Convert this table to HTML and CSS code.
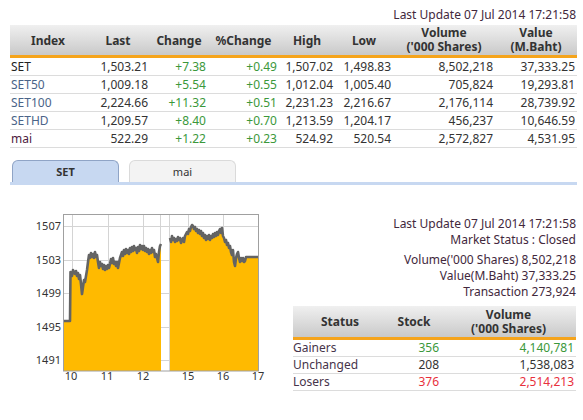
FILE: index.html
```html
<!DOCTYPE html>
<html>
<head>
<meta charset="utf-8">
<link rel="stylesheet" href="styles.css">
</head>
<body>
<div class="page">
  <div class="update top">Last Update 07 Jul 2014 17:21:58</div>
  <table class="idx">
    <colgroup>
      <col class="c-index"><col class="c-last"><col class="c-chg"><col class="c-pchg"><col class="c-high"><col class="c-low"><col class="c-vol"><col class="c-val">
    </colgroup>
    <thead>
      <tr><th>Index</th><th>Last</th><th>Change</th><th>%Change</th><th>High</th><th>Low</th><th><div class="l2">Volume</div><div class="l2">('000 Shares)</div></th><th><div class="l2">Value</div><div class="l2">(M.Baht)</div></th></tr>
    </thead>
    <tbody>
      <tr><td class="name n-set">SET</td><td>1,503.21</td><td class="up">+7.38</td><td class="up">+0.49</td><td>1,507.02</td><td>1,498.83</td><td>8,502,218</td><td>37,333.25</td></tr>
      <tr><td class="name n-blue">SET50</td><td>1,009.18</td><td class="up">+5.54</td><td class="up">+0.55</td><td>1,012.04</td><td>1,005.40</td><td>705,824</td><td>19,293.81</td></tr>
      <tr><td class="name n-blue">SET100</td><td>2,224.66</td><td class="up">+11.32</td><td class="up">+0.51</td><td>2,231.23</td><td>2,216.67</td><td>2,176,114</td><td>28,739.92</td></tr>
      <tr><td class="name n-blue">SETHD</td><td>1,209.57</td><td class="up">+8.40</td><td class="up">+0.70</td><td>1,213.59</td><td>1,204.17</td><td>456,237</td><td>10,646.59</td></tr>
      <tr><td class="name n-mai">mai</td><td>522.29</td><td class="up">+1.22</td><td class="up">+0.23</td><td>524.92</td><td>520.54</td><td>2,572,827</td><td>4,531.95</td></tr>
    </tbody>
  </table>

  <div class="tabs">
    <div class="tab active">SET</div>
    <div class="tab">mai</div>
  </div>
  <div class="tabbar"></div>

  <div class="lower">
    <svg class="chart" width="293" height="205" viewBox="0 185 293 205" xmlns="http://www.w3.org/2000/svg">
      <rect x="63.5" y="214.5" width="195" height="156.5" fill="#fff"/>
      <g stroke="#d4d4d4" stroke-width="1">
        <line x1="63" y1="226.5" x2="259" y2="226.5"/>
        <line x1="63" y1="260.5" x2="259" y2="260.5"/>
        <line x1="63" y1="293.5" x2="259" y2="293.5"/>
        <line x1="63" y1="327.5" x2="259" y2="327.5"/>
        <line x1="63" y1="360.5" x2="259" y2="360.5"/>
        <line x1="72.5" y1="214" x2="72.5" y2="371"/>
        <line x1="108.5" y1="214" x2="108.5" y2="371"/>
        <line x1="143.5" y1="214" x2="143.5" y2="371"/>
        <line x1="160.5" y1="214" x2="160.5" y2="371"/>
        <line x1="169.5" y1="214" x2="169.5" y2="371"/>
        <line x1="188.5" y1="214" x2="188.5" y2="371"/>
        <line x1="223.5" y1="214" x2="223.5" y2="371"/>
      </g>
      <polygon fill="#ffba00" points="63,371 63,321 70,321 70.5,272 72,276 73,270 75,274 76,271 77,276 78,273 79,279 80,275 81,284 82,294 83,287 84,280 85,282 86,276 87,270 88,262 89,255 90,258 91,253 92,257 93,254 94,258 95,252 96,257 97,255 98,262 99,268 100,262 101,266 102,264 103,269 104,265 105,270 106,266 107,269 108,265 109,268 110,264 111,259 112,263 113,258 114,264 115,262 116,266 117,262 118,268 119,263 120,258 121,255 122,252 123,256 124,250 125,254 126,249 127,253 128,250 129,254 130,248 131,252 132,247 133,251 134,246 135,250 136,248 137,253 138,247 139,251 140,245 141,249 142,246 143,250 144,246 145,251 146,248 147,252 148,249 149,254 150,250 151,253 152,248 153,252 154,250 155,257 156,254 157,258 158,262 159,252 160,246 161,244 161,371"/>
      <polygon fill="#ffba00" points="170,371 170,238 171,242 172,236 173,240 174,238 175,242 176,239 177,241 178,237 179,240 180,238 181,243 182,240 183,238 184,242 185,236 186,234 187,232 188,234 189,229 190,231 191,227 192,225 193,226 194,229 195,227 196,231 197,229 198,233 199,230 200,234 201,231 202,236 203,233 204,238 205,235 206,240 207,236 208,239 209,235 210,240 211,236 212,238 213,234 214,237 215,233 216,236 217,232 218,235 219,231 220,229 221,233 222,228 223,236 224,238 225,242 226,240 227,245 228,243 229,248 230,246 231,252 232,255 233,250 234,262 235,266 236,258 237,254 238,252 239,258 240,262 241,258 242,261 243,258 244,262 245,261 246,257 259,257 259,371"/>
      <g fill="none" stroke="#646464" stroke-width="2.6" stroke-linejoin="round">
        <polyline points="63,321 70,321 70.5,272 72,276 73,270 75,274 76,271 77,276 78,273 79,279 80,275 81,284 82,294 83,287 84,280 85,282 86,276 87,270 88,262 89,255 90,258 91,253 92,257 93,254 94,258 95,252 96,257 97,255 98,262 99,268 100,262 101,266 102,264 103,269 104,265 105,270 106,266 107,269 108,265 109,268 110,264 111,259 112,263 113,258 114,264 115,262 116,266 117,262 118,268 119,263 120,258 121,255 122,252 123,256 124,250 125,254 126,249 127,253 128,250 129,254 130,248 131,252 132,247 133,251 134,246 135,250 136,248 137,253 138,247 139,251 140,245 141,249 142,246 143,250 144,246 145,251 146,248 147,252 148,249 149,254 150,250 151,253 152,248 153,252 154,250 155,257 156,254 157,258 158,262 159,252 160,246 161,244"/>
        <polyline points="170,238 171,242 172,236 173,240 174,238 175,242 176,239 177,241 178,237 179,240 180,238 181,243 182,240 183,238 184,242 185,236 186,234 187,232 188,234 189,229 190,231 191,227 192,225 193,226 194,229 195,227 196,231 197,229 198,233 199,230 200,234 201,231 202,236 203,233 204,238 205,235 206,240 207,236 208,239 209,235 210,240 211,236 212,238 213,234 214,237 215,233 216,236 217,232 218,235 219,231 220,229 221,233 222,228 223,236 224,238 225,242 226,240 227,245 228,243 229,248 230,246 231,252 232,255 233,250 234,262 235,266 236,258 237,254 238,252 239,258 240,262 241,258 242,261 243,258 244,262 245,261 246,257 259,257"/>
      </g>
      <rect x="63.5" y="214.5" width="195" height="156.5" fill="none" stroke="#a0a0a0" stroke-width="1"/>
      <g class="ax" text-anchor="end">
        <text x="61" y="230">1507</text>
        <text x="61" y="264">1503</text>
        <text x="61" y="297">1499</text>
        <text x="61" y="331">1495</text>
        <text x="61" y="364">1491</text>
      </g>
      <g class="ax" text-anchor="middle">
        <text x="71" y="380">10</text>
        <text x="107" y="380">11</text>
        <text x="143" y="380">12</text>
        <text x="188" y="380">15</text>
        <text x="223" y="380">16</text>
        <text x="258" y="380">17</text>
      </g>
    </svg>

    <div class="side">
      <div class="info">
        <div class="update">Last Update 07 Jul 2014 17:21:58</div>
        <div>Market Status : Closed</div>
        <div class="gap">Volume('000 Shares) 8,502,218</div>
        <div>Value(M.Baht) 37,333.25</div>
        <div>Transaction 273,924</div>
      </div>
      <table class="adv">
        <colgroup><col class="c-status"><col class="c-stock"><col class="c-svol"></colgroup>
        <thead>
          <tr><th>Status</th><th>Stock</th><th><div class="l2">Volume</div><div class="l2">('000 Shares)</div></th></tr>
        </thead>
        <tbody>
          <tr><td class="lab">Gainers</td><td class="up">356</td><td class="up">4,140,781</td></tr>
          <tr><td class="lab">Unchanged</td><td>208</td><td>1,538,083</td></tr>
          <tr><td class="lab">Losers</td><td class="down">376</td><td class="down">2,514,213</td></tr>
        </tbody>
      </table>
    </div>
  </div>
</div>
</body>
</html>
```

FILE: styles.css
```css
html, body {
  margin: 0;
  padding: 0;
  background: #fff;
}
body {
  font-family: "Noto Sans", "DejaVu Sans", sans-serif;
  font-size: 12px;
  color: #333;
}
.page {
  width: 567px;
  padding: 6px 6px 0 10px;
}
.update {
  color: #42283c;
}
.top {
  text-align: right;
  line-height: 18px;
  height: 19px;
  padding-right: 1px;
}
table {
  border-collapse: collapse;
  table-layout: fixed;
}
.idx {
  width: 567px;
}
.c-index { width: 76px; }
.c-last { width: 64px; }
.c-chg { width: 58px; }
.c-pchg { width: 71px; }
.c-high { width: 56px; }
.c-low { width: 58px; }
.c-vol { width: 102px; }
.c-val { width: 82px; }
th {
  background: linear-gradient(#f0f0f0, #c9c9c9);
  border-bottom: 3px solid #f5a41c;
  font-weight: bold;
  color: #333;
  line-height: 15px;
  padding: 0;
  text-align: center;
  white-space: nowrap;
}
.l2 {
  height: 14px;
  line-height: 14px;
  overflow: visible;
}
.idx th {
  height: 30px;
}
td {
  padding: 0 2px 0 0;
  text-align: right;
  border-bottom: 1px solid #dcdcdc;
  white-space: nowrap;
}
.idx td {
  height: 16px;
  line-height: 16px;
  padding-top: 1px;
}
td.name {
  text-align: left;
  padding-left: 1px;
}
.n-set { color: #222; }
.n-blue { color: #4a6488; }
.n-mai { color: #4e2240; }
.up { color: #3b983b; }
.down { color: #e8303c; }

.tabs {
  display: flex;
  gap: 10px;
  margin-top: 12px;
  padding-left: 2px;
}
.tab {
  width: 105px;
  height: 21px;
  line-height: 21px;
  text-align: center;
  background: #f3f3f3;
  border: 1px solid #dadada;
  border-bottom: none;
  border-radius: 6px 6px 0 0;
  font-size: 11px;
  color: #333;
}
.tab.active {
  background: #c7d8f1;
  border-color: #8fa4c6;
  font-weight: bold;
}
.tabbar {
  height: 3px;
  background: #c7d8f1;
}

.lower {
  display: flex;
  margin-left: -10px;
}
.chart {
  display: block;
  flex: none;
}
.ax {
  font-family: "Noto Sans", "DejaVu Sans", sans-serif;
  font-size: 11px;
  fill: #333;
}
.side {
  width: 284px;
  flex: none;
}
.info {
  text-align: right;
  color: #42283c;
  line-height: 16px;
  padding-top: 31px;
  padding-right: 1px;
}
.info .gap {
  margin-top: 4px;
}
.adv {
  width: 283px;
  margin-top: 6px;
}
.c-status { width: 94px; }
.c-stock { width: 54px; }
.c-svol { width: 135px; }
.adv th {
  height: 31px;
}
.adv td {
  height: 16px;
  line-height: 16px;
}
.adv td.lab {
  text-align: left;
  color: #46344a;
}
```
